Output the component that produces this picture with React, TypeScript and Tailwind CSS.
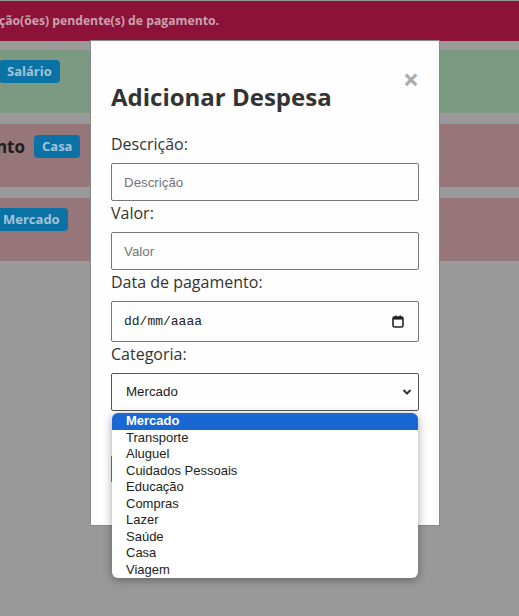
import React from "react";

const categorias = [
  "Mercado",
  "Transporte",
  "Aluguel",
  "Cuidados Pessoais",
  "Educação",
  "Compras",
  "Lazer",
  "Saúde",
  "Casa",
  "Viagem",
];

function Badge({ label }: { label: string }) {
  return (
    <span className="inline-flex h-[23px] items-center rounded-[4px] bg-[#0b72a6] px-[8px] text-[13px] font-bold text-[#a3c4d8]">
      {label}
    </span>
  );
}

function Field({ label, children }: { label: string; children: React.ReactNode }) {
  return (
    <div>
      <label className="mb-[7px] block h-[24px] text-[16px] leading-[24px] text-[#333]">{label}</label>
      {children}
    </div>
  );
}

export default function App() {
  return (
    <div
      className="relative h-[616px] w-[519px] overflow-hidden bg-[#999]"
      style={{ fontFamily: '"Open Sans", sans-serif' }}
    >
      {/* pagina por tras do modal */}
      <div className="pt-px">
        <div className="flex h-[40px] items-center bg-[#8c1239]">
          <div className="flex w-[219px] justify-end overflow-hidden whitespace-nowrap">
            <span className="text-[12.2px] font-bold text-[#c7a2ae]">
              Você tem 3 transação(ões) pendente(s) de pagamento.
            </span>
          </div>
        </div>
        <div className="flex flex-col gap-[11px] pt-[9px]">
          <div className="h-[63px] bg-[#7c9982] pt-[10px]">
            <div className="-ml-[1px] flex">
              <Badge label="Salário" />
            </div>
          </div>
          <div className="h-[63px] bg-[#967679] pt-[10px]">
            <div className="flex items-center gap-[9px]">
              <div className="flex w-[25px] justify-end overflow-hidden whitespace-nowrap">
                <span className="text-[17px] font-bold text-[#1e1e1e]">Pagamento</span>
              </div>
              <Badge label="Casa" />
            </div>
          </div>
          <div className="h-[63px] bg-[#967679] pt-[10px]">
            <div className="-ml-[5px] flex">
              <Badge label="Mercado" />
            </div>
          </div>
        </div>
      </div>

      {/* modal */}
      <div className="absolute left-[90px] top-[40px] w-[350px] border border-[#888] bg-[#fefefe] px-[20px] pt-[20px] pb-[20px]">
        <div className="flex items-start justify-between">
          <h2 className="mt-[20px] mb-[19px] text-[24px] font-bold leading-[32px] text-[#333]">
            Adicionar Despesa
          </h2>
          <span className="mt-[4px] text-[28px] font-bold leading-none text-[#aaa]">×</span>
        </div>

        <div className="flex flex-col">
          <Field label="Descrição:">
            <input
              placeholder="Descrição"
              className="block h-[38px] w-full rounded-[2px] border border-[#767676] px-[12px] text-[13.33px] text-[#222] placeholder:text-[#757575]"
              style={{ fontFamily: '"Liberation Sans", Arial, sans-serif' }}
            />
          </Field>
          <Field label="Valor:">
            <input
              placeholder="Valor"
              className="block h-[38px] w-full rounded-[2px] border border-[#767676] px-[12px] text-[13.33px] text-[#222] placeholder:text-[#757575]"
              style={{ fontFamily: '"Liberation Sans", Arial, sans-serif' }}
            />
          </Field>
          <Field label="Data de pagamento:">
            <div className="flex h-[41px] w-full items-center justify-between rounded-[2px] border border-[#767676] pl-[12px] pr-[14px]">
              <span
                className="text-[13px] text-[#222]"
                style={{ fontFamily: '"Liberation Mono", monospace' }}
              >
                dd/mm/aaaa
              </span>
              <svg width="12" height="13" viewBox="0 0 12 13" fill="none">
                <rect x="1" y="2" width="10" height="10" rx="1.5" stroke="#222" strokeWidth="1.6" />
                <rect x="1" y="2" width="10" height="2.6" fill="#222" />
                <rect x="3" y="0.5" width="1.5" height="2" fill="#222" />
                <rect x="7.5" y="0.5" width="1.5" height="2" fill="#222" />
              </svg>
            </div>
          </Field>
          <Field label="Categoria:">
            <div
              className="flex h-[38px] w-full items-center justify-between rounded-[2px] border border-[#555] pl-[14px] pr-[6px]"
              style={{ fontFamily: '"Liberation Sans", Arial, sans-serif' }}
            >
              <span className="text-[13.33px] text-[#222]">Mercado</span>
              <svg width="10" height="8" viewBox="0 0 10 8" fill="none">
                <path d="M1.5 2 L5 5.5 L8.5 2" stroke="#333" strokeWidth="2" />
              </svg>
            </div>
          </Field>
          <button
            aria-label="Adicionar"
            className="mt-[44px] mb-[22px] h-[28px] w-[200px] rounded-[2px] border border-[#767676] bg-[#efefef]"
          />
        </div>
      </div>

      {/* lista aberta do select */}
      <div
        className="absolute left-[112px] top-[413px] w-[306px] overflow-hidden rounded-[6px] bg-white shadow-[0_2px_10px_rgba(0,0,0,0.35)]"
        style={{ fontFamily: '"Liberation Sans", Arial, sans-serif' }}
      >
        {categorias.map((c, i) => (
          <div
            key={c}
            className={
              i === 0
                ? "h-[16.5px] bg-[#1967d2] pl-[14px] text-[13px] font-bold leading-[16.5px] text-white"
                : "h-[16.5px] pl-[14px] text-[13px] leading-[16.5px] text-[#222]"
            }
          >
            {c}
          </div>
        ))}
      </div>
    </div>
  );
}
